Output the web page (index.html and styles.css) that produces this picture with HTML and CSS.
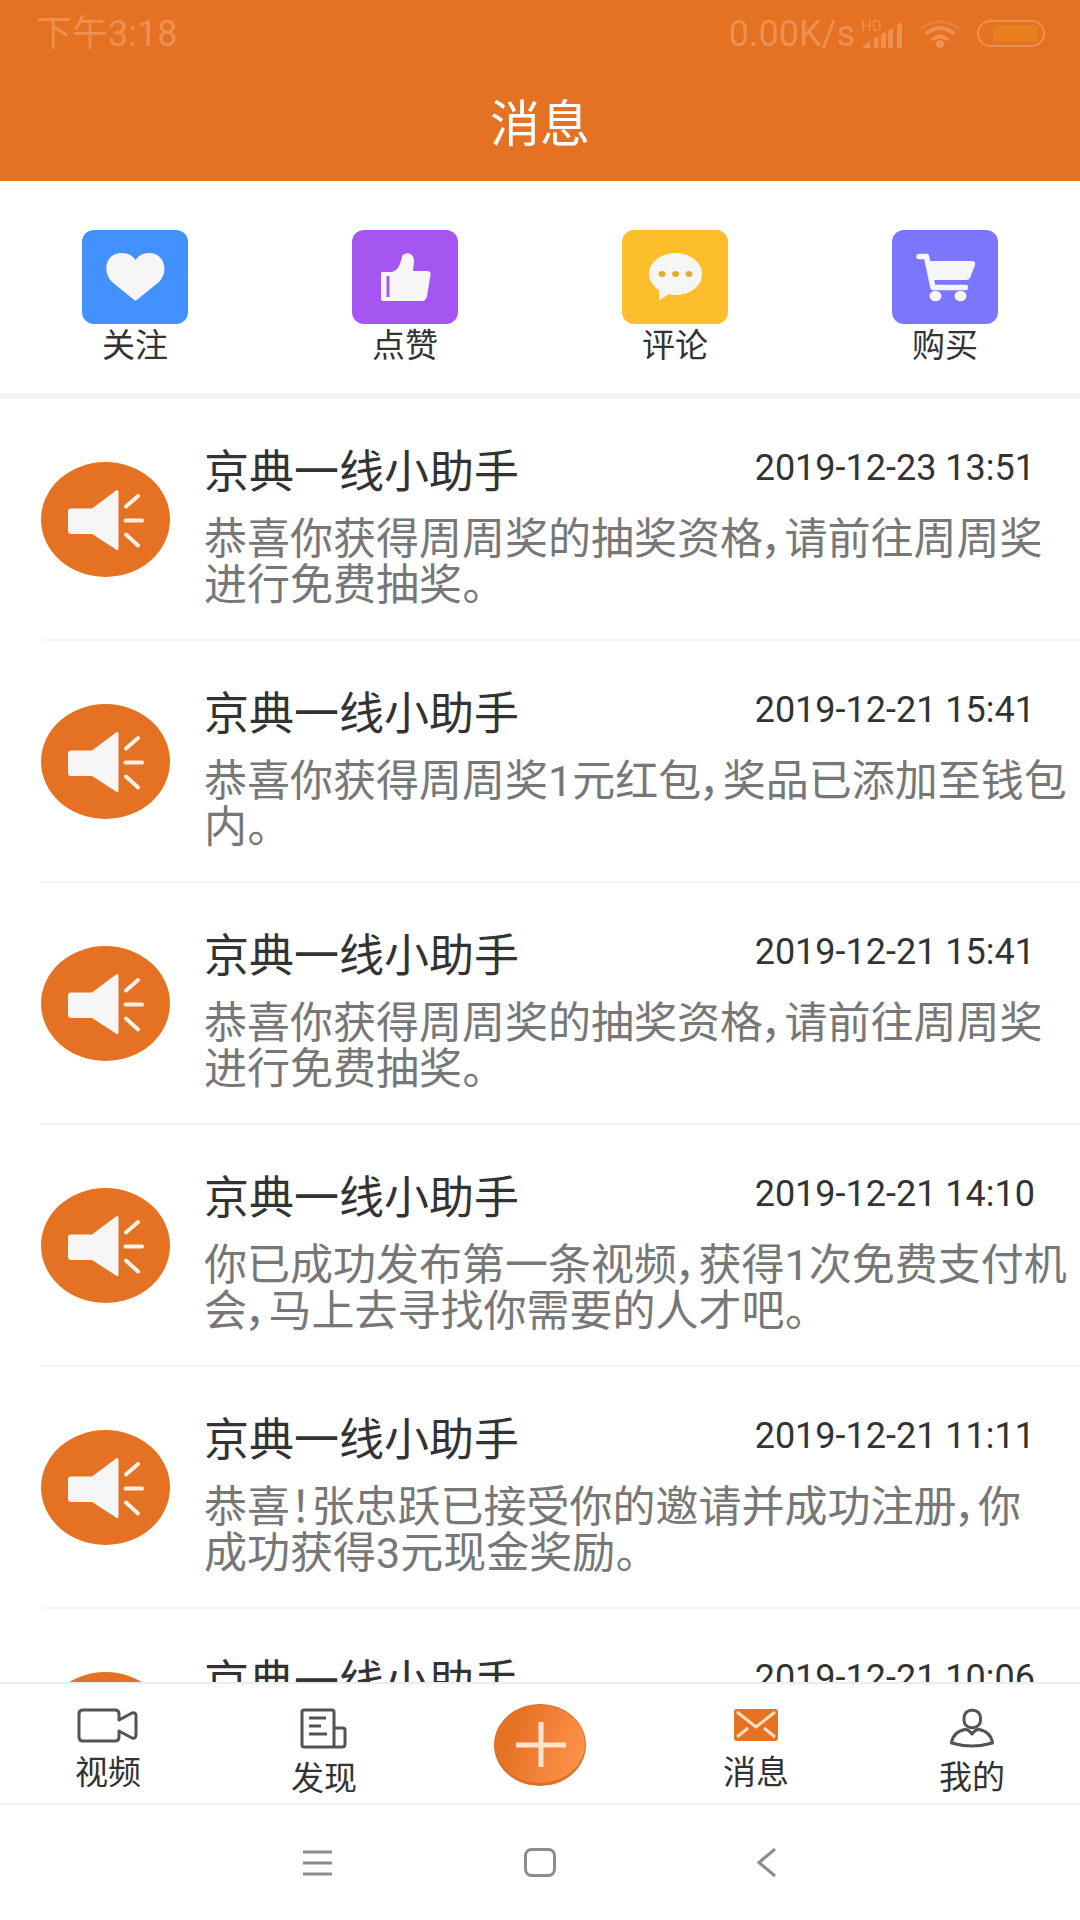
FILE: index.html
```html
<!DOCTYPE html>
<html lang="zh-CN">
<head>
<meta charset="utf-8">
<meta name="viewport" content="width=device-width, initial-scale=1">
<title>消息</title>
<link rel="stylesheet" href="styles.css">
</head>
<body>
<svg class="defs" aria-hidden="true">
  <symbol id="speaker" viewBox="0 0 129 115">
    <ellipse cx="64.500" cy="57.500" rx="64.500" ry="57.500" fill="#e57123"/>
    <path d="M30 46.500H51L75 28.500Q77.500 27 77.500 30V86Q77.500 89 75 87.500L51 72H30Q27 72 27 69V49.500Q27 46.500 30 46.500Z" fill="#f6f6f6"/>
    <path d="M85 44.500L97 34M84.500 58.500H101M85 72.500L97 83.500" fill="none" stroke="#fdf0e4" stroke-width="4" stroke-linecap="round"/>
  </symbol>
</svg>

<header class="top">
  <div class="status">
    <span class="clock">下午3:18</span>
    <span class="speed">0.00K/s</span>
    <svg class="signal" width="44" height="30" viewBox="0 0 44 30" aria-hidden="true">
      <text x="0" y="12" class="hd">HD</text>
      <path d="M2 29V27L9 22V29ZM13 29V19L17.500 17V29ZM20 29V15L25 13V29ZM27 29V12L32 9V29ZM36 29V6L41 3V29Z" fill="#ee9052"/>
    </svg>
    <svg class="wifi" width="40" height="28" viewBox="0 0 40 28" aria-hidden="true">
      <path d="M1 9Q20 -6 39 9" fill="none" stroke="#e97f38" stroke-width="3"/>
      <path d="M6 14Q20 2 34 14M12 20Q20 13 28 20" fill="none" stroke="#ee9052" stroke-width="4"/>
      <circle cx="20" cy="24" r="4" fill="#ee9052"/>
    </svg>
    <svg class="battery" width="68" height="28" viewBox="0 0 68 28" aria-hidden="true">
      <rect x="1" y="1" width="66" height="25" rx="12.500" fill="none" stroke="#ee9052" stroke-width="2"/>
      <rect x="16" y="5" width="45" height="17" rx="4" fill="#ea7e1e"/>
    </svg>
  </div>
  <h1 class="heading">消息</h1>
</header>

<nav class="shortcuts">
  <a href="#follow" class="shortcut">
    <svg width="106" height="94" viewBox="0 0 106 94" aria-hidden="true">
      <rect width="106" height="94" rx="12" fill="#4291fc"/>
      <path d="M53.500 71L30 52C20 42 23 23 40 23C46 23 51 26 53.500 30C56 26 61 23 67 23C83 23 87 42 77 52Z" fill="#f6f6f6"/>
    </svg>
    <span>关注</span>
  </a>
  <a href="#likes" class="shortcut">
    <svg width="106" height="94" viewBox="0 0 106 94" aria-hidden="true">
      <rect width="106" height="94" rx="12" fill="#a556f0"/>
      <path d="M30 42H39C46 41 48 35 50 27C51 22 62 21 62 31C62 35 61 38 61 41H75Q79 41 78.500 45L75 66Q74 71 70 71H31Q29 71 29 69V44Q29 42 30 42Z" fill="#f6f6f6"/>
      <path d="M36 46V67" stroke="#a556f0" stroke-width="3"/>
    </svg>
    <span>点赞</span>
  </a>
  <a href="#comments" class="shortcut">
    <svg width="106" height="94" viewBox="0 0 106 94" aria-hidden="true">
      <rect width="106" height="94" rx="12" fill="#fcbf2b"/>
      <path d="M53.500 23C68 23 80 32 80 44C80 56 68 65 53.500 65C51 65 49 65 47 64L37 70.500V60C31 56 27 50 27 44C27 32 39 23 53.500 23Z" fill="#f6f6f6"/>
      <g fill="#e5ac31"><ellipse cx="40" cy="44" rx="3.500" ry="3"/><ellipse cx="53.500" cy="44" rx="3.500" ry="3"/><ellipse cx="67" cy="44" rx="3.500" ry="3"/></g>
    </svg>
    <span>评论</span>
  </a>
  <a href="#orders" class="shortcut">
    <svg width="106" height="94" viewBox="0 0 106 94" aria-hidden="true">
      <rect width="106" height="94" rx="12" fill="#7b77fd"/>
      <path d="M27 26.500H34.500L41 57.500H73.500" fill="none" stroke="#f6f6f6" stroke-width="5.500" stroke-linecap="round" stroke-linejoin="round"/>
      <path d="M36 31H80Q84 31 83 35L78 48Q77 50 74 50H40Z" fill="#f6f6f6"/>
      <ellipse cx="43.500" cy="66" rx="6" ry="5.300" fill="#f6f6f6"/><ellipse cx="68.500" cy="66" rx="6" ry="5.300" fill="#f6f6f6"/>
    </svg>
    <span>购买</span>
  </a>
</nav>

<main class="messages">
  <article class="message">
    <svg class="avatar" aria-hidden="true"><use href="#speaker"/></svg>
    <div class="content">
      <div class="line"><h2>京典一线小助手</h2><time datetime="2019-12-23T13:51">2019-12-23 13:51</time></div>
      <p>恭喜你获得周周奖的抽奖资格，请前往周周奖进行免费抽奖。</p>
    </div>
  </article>
  <article class="message">
    <svg class="avatar" aria-hidden="true"><use href="#speaker"/></svg>
    <div class="content">
      <div class="line"><h2>京典一线小助手</h2><time datetime="2019-12-21T15:41">2019-12-21 15:41</time></div>
      <p>恭喜你获得周周奖1元红包，奖品已添加至钱包内。</p>
    </div>
  </article>
  <article class="message">
    <svg class="avatar" aria-hidden="true"><use href="#speaker"/></svg>
    <div class="content">
      <div class="line"><h2>京典一线小助手</h2><time datetime="2019-12-21T15:41">2019-12-21 15:41</time></div>
      <p>恭喜你获得周周奖的抽奖资格，请前往周周奖进行免费抽奖。</p>
    </div>
  </article>
  <article class="message">
    <svg class="avatar" aria-hidden="true"><use href="#speaker"/></svg>
    <div class="content">
      <div class="line"><h2>京典一线小助手</h2><time datetime="2019-12-21T14:10">2019-12-21 14:10</time></div>
      <p>你已成功发布第一条视频，获得1次免费支付机会，马上去寻找你需要的人才吧。</p>
    </div>
  </article>
  <article class="message">
    <svg class="avatar" aria-hidden="true"><use href="#speaker"/></svg>
    <div class="content">
      <div class="line"><h2>京典一线小助手</h2><time datetime="2019-12-21T11:11">2019-12-21 11:11</time></div>
      <p>恭喜！张忠跃已接受你的邀请并成功注册，你<br>成功获得3元现金奖励。</p>
    </div>
  </article>
  <article class="message">
    <svg class="avatar" aria-hidden="true"><use href="#speaker"/></svg>
    <div class="content">
      <div class="line"><h2>京典一线小助手</h2><time datetime="2019-12-21T10:06">2019-12-21 10:06</time></div>
    </div>
  </article>
</main>

<nav class="tabs">
  <a href="#video" class="tab">
    <svg width="60" height="33" viewBox="0 0 60 33" aria-hidden="true">
      <path d="M5 1H37Q41 1 41 5V11L54 4Q58 3 58 7V26Q58 30 54 29L41 22V28Q41 32 37 32H5Q1 32 1 28V5Q1 1 5 1Z"/>
    </svg>
    <span>视频</span>
  </a>
  <a href="#discover" class="tab">
    <svg width="46" height="39" viewBox="0 0 46 39" aria-hidden="true">
      <path d="M33 38V3Q33 1 31 1H3Q1 1 1 3V36Q1 38 3 38H41Q44 38 44 35V21Q44 19 42 19H33M8 9H25M8 17H20M8 25H26"/>
    </svg>
    <span>发现</span>
  </a>
  <button type="button" class="tab publish" aria-label="发布">
    <svg width="92" height="82" viewBox="0 0 92 82" aria-hidden="true">
      <defs><linearGradient id="glow" x1="0" y1="0.300" x2="1" y2="0.600"><stop offset="0.200" stop-color="#e67225"/><stop offset="1" stop-color="#ff924c"/></linearGradient></defs>
      <ellipse cx="46" cy="41" rx="46" ry="41" fill="#d9702c"/>
      <ellipse cx="46" cy="40" rx="45" ry="39" fill="url(#glow)"/>
      <path d="M22 41H72M47 18V63" stroke="#ffe4cd" stroke-width="5"/>
    </svg>
  </button>
  <a href="#messages" class="tab current" aria-current="page">
    <svg width="44" height="33" viewBox="0 0 44 33" aria-hidden="true">
      <rect width="44" height="32" rx="3"/>
      <path d="M3 3L22 18L41 3M3 28L14 19M41 28L30 19"/>
    </svg>
    <span>消息</span>
  </a>
  <a href="#me" class="tab">
    <svg width="44" height="38" viewBox="0 0 44 38" aria-hidden="true">
      <rect x="14" y="1.200" width="16.500" height="17.500" rx="7.500"/>
      <path d="M15 20.500Q18 20 22 25Q26 20 29 20.500Q41 23 42.500 34Q32 37 22 37Q12 37 1.500 34Q3 23 15 20.500Z"/>
    </svg>
    <span>我的</span>
  </a>
</nav>

<footer class="system">
  <button type="button" aria-label="菜单">
    <svg width="32" height="30" viewBox="0 0 32 30" aria-hidden="true"><path d="M2 4H31M2 15H31M2 26H31"/></svg>
  </button>
  <button type="button" aria-label="主页">
    <svg width="32" height="30" viewBox="0 0 32 30" aria-hidden="true"><rect x="1.500" y="1.500" width="29" height="26" rx="6"/></svg>
  </button>
  <button type="button" aria-label="返回">
    <svg width="32" height="30" viewBox="0 0 32 30" aria-hidden="true"><path d="M28 1L12 14.500L28 28"/></svg>
  </button>
</footer>
</body>
</html>
```
FILE: styles.css
```css
* {
  box-sizing: border-box;
}

body {
  margin: 0;
  height: 100vh;
  display: flex;
  flex-direction: column;
  background: #fff;
  color: #333;
  font-family: Roboto, "Noto Sans CJK SC", sans-serif;
}

a {
  color: inherit;
  text-decoration: none;
}

button {
  padding: 0;
  border: 0;
  background: none;
  font: inherit;
}

svg {
  display: block;
  flex: none;
}

.defs {
  position: absolute;
  width: 0;
  height: 0;
}

.top {
  flex: none;
  padding-bottom: 21px;
  background: #e57123;
  color: #fff;
}

.status {
  display: flex;
  align-items: center;
  height: 68px;
  padding: 0 35px 0 36px;
  color: #ee9052;
  font-size: 36px;
  line-height: 40px;
}

.speed {
  margin-left: auto;
}

.signal {
  margin-left: 6px;
  overflow: visible;
}

.hd {
  fill: #ee9052;
  font-size: 15px;
}

.wifi {
  margin-left: 15px;
}

.battery {
  margin-left: 17px;
}

.heading {
  margin: 0;
  padding-top: 22px;
  font-size: 50px;
  font-weight: 400;
  line-height: 70px;
  text-align: center;
}

.shortcuts {
  flex: none;
  display: grid;
  grid-template-columns: repeat(4, 1fr);
  padding: 49px 0 27px;
  border-bottom: 6px solid #f5f5f5;
}

.shortcut {
  display: flex;
  flex-direction: column;
  align-items: center;
  gap: 2px;
  font-size: 33px;
  line-height: 40px;
}

.messages {
  flex: 1;
  min-height: 0;
  overflow-y: auto;
  scrollbar-width: none;
}

.message {
  display: flex;
  align-items: flex-start;
  gap: 34px;
  min-height: 242px;
  margin-left: 41px;
  padding-top: 47px;
  border-bottom: 2px solid #f5f5f5;
}

.avatar {
  width: 129px;
  height: 115px;
  margin-top: 16px;
}

.content {
  flex: 1;
  min-width: 0;
}

.line {
  display: flex;
  justify-content: space-between;
  padding-right: 45px;
}

h2 {
  margin: 0;
  font-size: 45px;
  font-weight: 400;
  line-height: 54px;
}

time {
  font-size: 36px;
  line-height: 44px;
}

.message p {
  margin: 16px 0 0;
  color: #777;
  font-size: 43px;
  line-height: 46px;
  font-feature-settings: "palt";
}

.tabs {
  flex: none;
  display: grid;
  grid-template-columns: repeat(5, 1fr);
  height: 123px;
  border-top: 2px solid #ececec;
  border-bottom: 2px solid #f3f3f3;
}

.tab {
  display: flex;
  flex-direction: column;
  align-items: center;
  gap: 11px;
  padding-top: 25px;
  font-size: 33px;
  line-height: 40px;
}

.tab:not(.publish) svg {
  fill: none;
  stroke: #50545a;
  stroke-width: 3px;
  stroke-linejoin: round;
  overflow: visible;
}

.current rect {
  fill: #e57123;
  stroke: none;
}

.current path {
  stroke: #ffe0c4;
}

.publish {
  padding-top: 20px;
}

.system {
  flex: none;
  display: flex;
  align-items: center;
  justify-content: space-between;
  height: 115px;
  padding: 0 26%;
}

.system button {
  display: flex;
  align-items: center;
  justify-content: center;
  width: 72px;
  height: 72px;
}

.system svg {
  fill: none;
  stroke: #8c8c8c;
  stroke-width: 3px;
}
```
